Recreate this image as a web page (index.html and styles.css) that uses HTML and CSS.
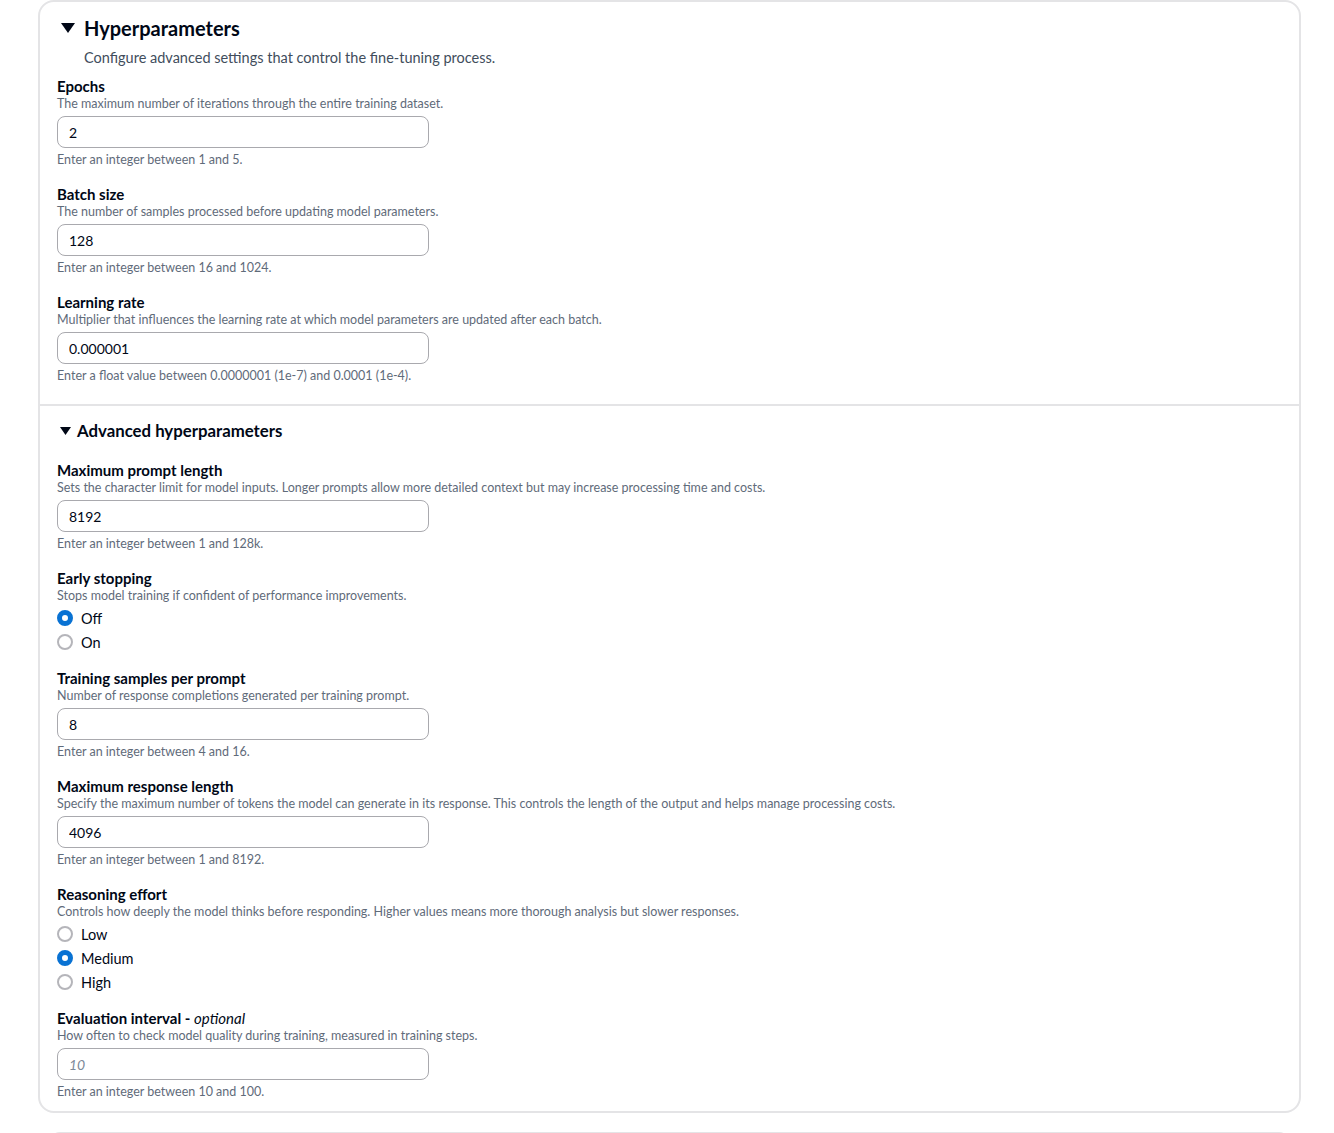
FILE: index.html
```html
<!DOCTYPE html>
<html lang="en">
<head>
    <meta charset="UTF-8">
    <meta name="viewport" content="width=device-width, initial-scale=1.0">
    <title>Hyperparameters</title>
    <link rel="stylesheet" href="styles.css">
</head>
<body>
    <div class="page">
        <section class="card">
            <!-- Basic hyperparameters -->
            <div class="card-section">
                <div class="expander-head">
                    <svg class="caret" width="14" height="10" viewBox="0 0 14 10"><polygon points="0,0 14,0 7,10" fill="#000716"/></svg>
                    <h2 class="section-title">Hyperparameters</h2>
                </div>
                <p class="section-desc">Configure advanced settings that control the fine-tuning process.</p>

                <div class="fields">
                    <div class="field">
                        <div class="field-label">Epochs</div>
                        <div class="field-desc">The maximum number of iterations through the entire training dataset.</div>
                        <input class="text-input" type="text" value="2">
                        <div class="field-hint">Enter an integer between 1 and 5.</div>
                    </div>
                    <div class="field">
                        <div class="field-label">Batch size</div>
                        <div class="field-desc">The number of samples processed before updating model parameters.</div>
                        <input class="text-input" type="text" value="128">
                        <div class="field-hint">Enter an integer between 16 and 1024.</div>
                    </div>
                    <div class="field">
                        <div class="field-label">Learning rate</div>
                        <div class="field-desc">Multiplier that influences the learning rate at which model parameters are updated after each batch.</div>
                        <input class="text-input" type="text" value="0.000001">
                        <div class="field-hint">Enter a float value between 0.0000001 (1e-7) and 0.0001 (1e-4).</div>
                    </div>
                </div>
            </div>

            <!-- Advanced hyperparameters -->
            <div class="card-section advanced">
                <div class="expander-head small">
                    <svg class="caret" width="11" height="8" viewBox="0 0 11 8"><polygon points="0,0 11,0 5.5,8" fill="#000716"/></svg>
                    <h3 class="section-title">Advanced hyperparameters</h3>
                </div>

                <div class="fields">
                    <div class="field">
                        <div class="field-label">Maximum prompt length</div>
                        <div class="field-desc">Sets the character limit for model inputs. Longer prompts allow more detailed context but may increase processing time and costs.</div>
                        <input class="text-input" type="text" value="8192">
                        <div class="field-hint">Enter an integer between 1 and 128k.</div>
                    </div>
                    <div class="field">
                        <div class="field-label">Early stopping</div>
                        <div class="field-desc">Stops model training if confident of performance improvements.</div>
                        <div class="radio-group">
                            <label class="radio"><span class="radio-dot checked"></span>Off</label>
                            <label class="radio"><span class="radio-dot"></span>On</label>
                        </div>
                    </div>
                    <div class="field">
                        <div class="field-label">Training samples per prompt</div>
                        <div class="field-desc">Number of response completions generated per training prompt.</div>
                        <input class="text-input" type="text" value="8">
                        <div class="field-hint">Enter an integer between 4 and 16.</div>
                    </div>
                    <div class="field">
                        <div class="field-label">Maximum response length</div>
                        <div class="field-desc">Specify the maximum number of tokens the model can generate in its response. This controls the length of the output and helps manage processing costs.</div>
                        <input class="text-input" type="text" value="4096">
                        <div class="field-hint">Enter an integer between 1 and 8192.</div>
                    </div>
                    <div class="field">
                        <div class="field-label">Reasoning effort</div>
                        <div class="field-desc">Controls how deeply the model thinks before responding. Higher values means more thorough analysis but slower responses.</div>
                        <div class="radio-group">
                            <label class="radio"><span class="radio-dot"></span>Low</label>
                            <label class="radio"><span class="radio-dot checked"></span>Medium</label>
                            <label class="radio"><span class="radio-dot"></span>High</label>
                        </div>
                    </div>
                    <div class="field">
                        <div class="field-label">Evaluation interval - <i>optional</i></div>
                        <div class="field-desc">How often to check model quality during training, measured in training steps.</div>
                        <input class="text-input" type="text" placeholder="10">
                        <div class="field-hint">Enter an integer between 10 and 100.</div>
                    </div>
                </div>
            </div>
        </section>

        <section class="card next-card"></section>
    </div>
</body>
</html>
```

FILE: styles.css
```css
body {
    margin: 0;
    background: #ffffff;
    color: #000716;
    font-family: Lato, "Open Sans", sans-serif;
    overflow: hidden;
}
.page {
    padding: 0 33px 0 38px;
    display: flex;
    flex-direction: column;
    gap: 19px;
}
.card {
    border: 2px solid #e4e4e6;
    border-radius: 16px;
    background: #fff;
}
.next-card {
    height: 20px;
    margin-left: 10px;
    margin-right: 10px;
}
.card-section {
    padding: 14px 17px 20px 17px;
}
.card-section.advanced {
    border-top: 2px solid #e4e4e6;
    padding-top: 15px;
    padding-bottom: 11px;
}
.expander-head {
    display: flex;
    align-items: center;
    gap: 9px;
    height: 24px;
    padding-left: 4px;
}
.expander-head.small {
    height: 20px;
    gap: 6px;
    padding-left: 3px;
    margin-bottom: 20px;
}
.section-title {
    margin: 0;
    font-size: 20px;
    font-weight: 700;
    line-height: 24px;
}
.expander-head.small .section-title {
    font-size: 16.8px;
    line-height: 20px;
}
.section-desc {
    margin: 8px 0 9px 27px;
    font-size: 14.5px;
    line-height: 20px;
    color: #414d5c;
}
.fields {
    display: flex;
    flex-direction: column;
    gap: 17px;
}
.field {
    display: flex;
    flex-direction: column;
    align-items: flex-start;
}
.field-label {
    font-size: 15px;
    font-weight: 700;
    line-height: 18px;
    color: #000716;
}
.field-label i {
    font-weight: 400;
}
.field-desc,
.field-hint {
    font-size: 12.5px;
    line-height: 16px;
    color: #5f6b7a;
}
.field-desc {
    margin-top: 1px;
}
.field-hint {
    margin-top: 4px;
}
.text-input {
    box-sizing: border-box;
    width: 372px;
    height: 32px;
    margin: 4px 0 0 0;
    padding: 0 11px;
    border: 1.5px solid #a9a9ae;
    border-radius: 8px;
    font-family: inherit;
    font-size: 14px;
    color: #000716;
    background: #fff;
    outline: none;
}
.text-input::placeholder {
    color: #7d8998;
    font-style: italic;
}
.radio-group {
    margin-top: 2px;
    margin-bottom: -2px;
    display: flex;
    flex-direction: column;
}
.radio {
    display: flex;
    align-items: center;
    gap: 8px;
    height: 24px;
    font-size: 14.5px;
    color: #000716;
}
.radio-dot {
    box-sizing: border-box;
    width: 16px;
    height: 16px;
    border-radius: 50%;
    border: 2px solid #b5b5ba;
    background: #fff;
}
.radio-dot.checked {
    border: 5px solid #0972d3;
}
```
